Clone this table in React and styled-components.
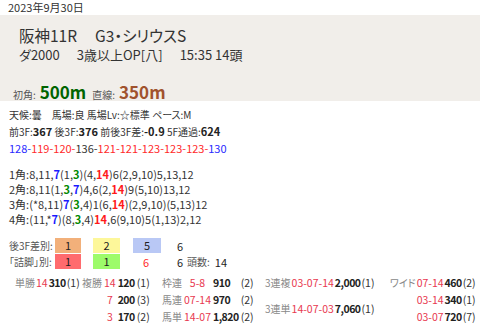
import React from "react";
import styled, { createGlobalStyle } from "styled-components";

const GlobalStyle = createGlobalStyle`
  html, body {
    margin: 0;
    padding: 0;
    background: #ffffff;
  }
  body {
    font-family: "Noto Sans CJK JP", "Noto Sans", sans-serif;
    font-feature-settings: "palt";
    color: #333333;
  }
`;

const Page = styled.div`
  width: 480px;
  height: 335px;
  overflow: hidden;
  white-space: nowrap;
`;

const DateLine = styled.div`
  font-size: 11px;
  line-height: 15px;
  padding: 0 8px;
  color: #333;
`;

const Header = styled.div`
  background: #f1eeea;
  padding: 10px 0 0 19px;
  height: 86px;
  box-sizing: border-box;
`;

const Title = styled.div`
  display: flex;
  gap: 18px;
  font-size: 15.5px;
  line-height: 20px;
  color: #333;
`;

const SubTitle = styled.div`
  display: flex;
  gap: 17px;
  font-size: 13px;
  line-height: 20px;
  color: #333;
`;

const Part = styled.span``;

const DistRow = styled.div`
  display: flex;
  align-items: baseline;
  margin: 14px 0 0 -6px;
  gap: 4px;
`;

const SmallLabel = styled.span`
  font-size: 10px;
  color: #555;
`;

const DistValue = styled.span`
  font-size: 17px;
  font-weight: 600;
  color: ${({ $c }) => $c};
  margin-right: 2px;
`;

const Info = styled.div`
  padding: 6px 9px 0;
`;

const InfoLine = styled.div`
  font-size: 10px;
  line-height: 16px;
  color: #333;
`;

const Num = styled.span`
  font-size: 11px;
  font-weight: 700;
  color: #222;
`;

const LapLine = styled.div`
  font-size: 11px;
  line-height: 16px;
`;

const Lap = styled.span`
  color: ${({ $c }) => $c};
`;

const Corners = styled.div`
  margin-top: 11px;
`;

const CornerLine = styled.div`
  font-size: 11px;
  line-height: 15px;
  color: #333;
`;

const Hl = styled.span`
  color: ${({ $c }) => $c};
  font-weight: 700;
`;

const Diff = styled.div`
  margin-top: 11px;
  display: grid;
  grid-template-columns: 46px 38px 40px 36px 8px 10px auto auto;
  justify-content: start;
  grid-auto-rows: 15px;
  row-gap: 1px;
  align-items: center;
  font-size: 11px;
`;

const DiffLabel = styled.span`
  font-size: 10px;
  color: #555;
`;

const ColorBox = styled.span`
  display: block;
  width: ${({ $w }) => $w || 26}px;
  height: 15px;
  line-height: 15px;
  text-align: center;
  background: ${({ $bg }) => $bg};
  color: #222;
`;

const PlainCell = styled.span`
  text-align: ${({ $align }) => $align || "left"};
  color: ${({ $c }) => $c || "#222"};
  width: ${({ $w }) => ($w ? `${$w}px` : "auto")};
  padding-left: ${({ $pl }) => $pl || 0}px;
`;

const Payouts = styled.div`
  display: flex;
  align-items: flex-start;
  margin-top: 5px;
  padding-left: 15px;
`;

const PayGroup = styled.div`
  display: grid;
  grid-template-columns: ${({ $cols }) => $cols};
  justify-content: start;
  grid-auto-rows: 17px;
  column-gap: ${({ $gap }) => ($gap === undefined ? 2 : $gap)}px;
  align-items: center;
  width: ${({ $w }) => ($w ? `${$w}px` : "auto")};
  flex: none;
  font-size: 10.5px;
`;

const PayLabel = styled.span`
  font-size: 10px;
  color: #888;
  grid-row: ${({ $span }) => ($span ? `span ${$span}` : "auto")};
`;

const Combo = styled.span`
  color: #e8384f;
  text-align: center;
  grid-row: ${({ $span }) => ($span ? `span ${$span}` : "auto")};
`;

const Yen = styled.span`
  color: #222;
  font-weight: 700;
  letter-spacing: -0.5px;
  grid-row: ${({ $span }) => ($span ? `span ${$span}` : "auto")};
`;

const Pop = styled.span`
  color: #333;
  grid-row: ${({ $span }) => ($span ? `span ${$span}` : "auto")};
`;

const laps = [
  ["128-", "#2a2aff"],
  ["119-", "#ff2a2a"],
  ["120-", "#ff2a2a"],
  ["136-", "#333"],
  ["121-", "#ff2a2a"],
  ["121-", "#ff2a2a"],
  ["123-", "#ff2a2a"],
  ["123-", "#ff2a2a"],
  ["123-", "#ff2a2a"],
  ["130", "#2a2aff"],
];

const B = "#1a1aff";
const G = "#008800";
const R = "#ff1a1a";

const corners = [
  ["1角:8,11,", [B, "7"], "(1,", [G, "3"], ")(4,", [R, "14"], ")6(2,9,10)5,13,12"],
  ["2角:8,11(1,", [G, "3"], ",", [B, "7"], ")4,6(2,", [R, "14"], ")9(5,10)13,12"],
  ["3角:(*8,11)", [B, "7"], "(", [G, "3"], ",4)1(6,", [R, "14"], ")(2,9,10)(5,13)12"],
  ["4角:(11,*", [B, "7"], ")(8,", [G, "3"], ",4)", [R, "14"], ",6(9,10)5(1,13)2,12"],
];

const payGroups = [
  {
    w: 67,
    gap: 1,
    cols: "auto minmax(11px, auto) auto auto",
    rows: [["単勝", "14", "310", "(1)"]],
  },
  {
    w: 80,
    cols: "20px minmax(11px, auto) auto auto",
    rows: [
      ["複勝", "14", "120", "(1)"],
      ["", "7", "200", "(3)"],
      ["", "3", "170", "(2)"],
    ],
  },
  {
    w: 103,
    cols: "auto minmax(27px, auto) auto auto",
    rows: [
      ["枠連", "5-8", "910", "(2)"],
      ["馬連", "07-14", "970", "(2)"],
      ["馬単", "14-07", "1,820", "(2)"],
    ],
  },
];

const App = () => {
  return (
    <Page>
      <GlobalStyle />
      <DateLine>2023年9月30日</DateLine>
      <Header>
        <Title>
          <Part>阪神11R</Part>
          <Part>G3・シリウスS</Part>
        </Title>
        <SubTitle>
          <Part>ダ2000</Part>
          <Part>3歳以上OP[八]</Part>
          <Part>15:35 14頭</Part>
        </SubTitle>
        <DistRow>
          <SmallLabel>初角:</SmallLabel>
          <DistValue $c="#006400">500m</DistValue>
          <SmallLabel>直線:</SmallLabel>
          <DistValue $c="#a0522d">350m</DistValue>
        </DistRow>
      </Header>
      <Info>
        <InfoLine>天候:曇　馬場:良 馬場Lv:☆標準 ペース:M</InfoLine>
        <InfoLine>
          前3F:<Num>367</Num> 後3F:<Num>376</Num> 前後3F差:<Num>-0.9</Num> 5F通過:<Num>624</Num>
        </InfoLine>
        <LapLine>
          {laps.map(([t, c], i) => (
            <Lap key={i} $c={c}>{t}</Lap>
          ))}
        </LapLine>
        <Corners>
          {corners.map((parts, i) => (
            <CornerLine key={i}>
              {parts.map((p, j) =>
                typeof p === "string" ? p : <Hl key={j} $c={p[0]}>{p[1]}</Hl>
              )}
            </CornerLine>
          ))}
        </Corners>
        <Diff>
          <DiffLabel>後3F差別:</DiffLabel>
          <ColorBox $bg="#f2b07a">1</ColorBox>
          <ColorBox $bg="#fdf79a" $w={27}>2</ColorBox>
          <ColorBox $bg="#b9c8f5" $w={28}>5</ColorBox>
          <span />
          <PlainCell>6</PlainCell>
          <span />
          <span />
          <DiffLabel>「詰脚」別:</DiffLabel>
          <ColorBox $bg="#ff6b6e">1</ColorBox>
          <ColorBox $bg="#9dfb6a" $w={27}>1</ColorBox>
          <PlainCell $c="#ff2a2a" $w={26} $align="center">6</PlainCell>
          <span />
          <PlainCell>6</PlainCell>
          <DiffLabel>頭数:</DiffLabel>
          <PlainCell $pl={5}>14</PlainCell>
        </Diff>
      </Info>
      <Payouts>
        {payGroups.map((g, i) => (
          <PayGroup key={i} $cols={g.cols} $w={g.w} $gap={g.gap}>
            {g.rows.map((r, j) => (
              <React.Fragment key={j}>
                <PayLabel>{r[0]}</PayLabel>
                <Combo>{r[1]}</Combo>
                <Yen>{r[2]}</Yen>
                <Pop>{r[3]}</Pop>
              </React.Fragment>
            ))}
          </PayGroup>
        ))}
        <PayGroup $cols="auto auto auto auto" $w={125} $gap={1}>
          <PayLabel>3連複</PayLabel>
          <Combo>03-07-14</Combo>
          <Yen>2,000</Yen>
          <Pop>(1)</Pop>
          <PayLabel $span={2}>3連単</PayLabel>
          <Combo $span={2}>14-07-03</Combo>
          <Yen $span={2}>7,060</Yen>
          <Pop $span={2}>(1)</Pop>
        </PayGroup>
        <PayGroup $cols="auto auto auto auto" $gap={1}>
          <PayLabel>ワイド</PayLabel>
          <Combo>07-14</Combo>
          <Yen>460</Yen>
          <Pop>(2)</Pop>
          <PayLabel />
          <Combo>03-14</Combo>
          <Yen>340</Yen>
          <Pop>(1)</Pop>
          <PayLabel />
          <Combo>03-07</Combo>
          <Yen>720</Yen>
          <Pop>(7)</Pop>
        </PayGroup>
      </Payouts>
    </Page>
  );
};

export default App;
